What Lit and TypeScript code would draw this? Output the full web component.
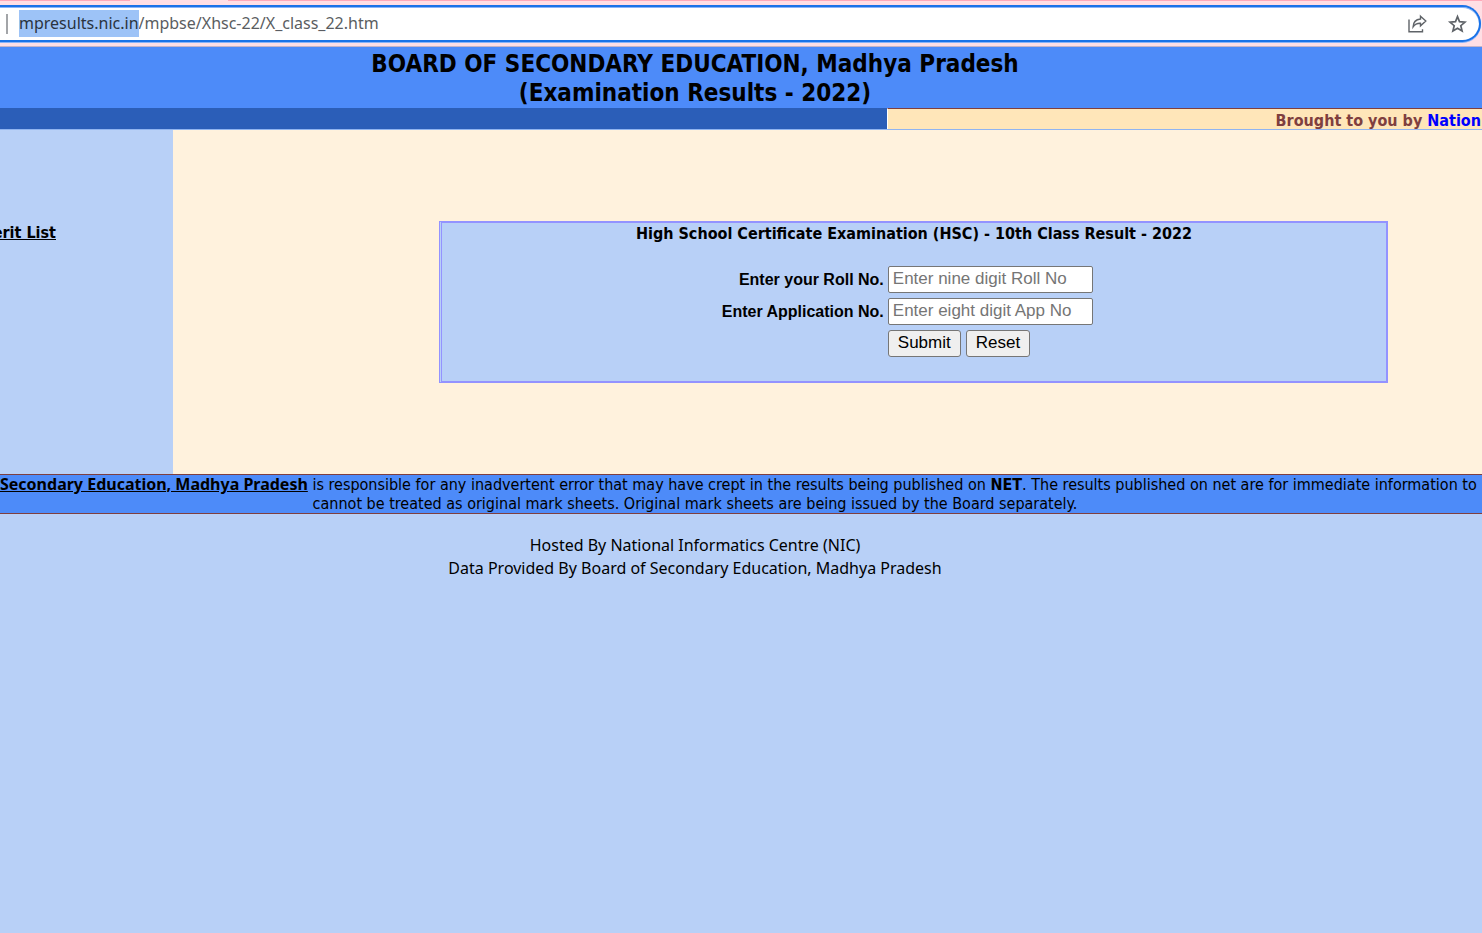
import { LitElement, html, css } from "lit";
import { customElement, query } from "lit/decorators.js";

@customElement("browser-bar")
class BrowserBar extends LitElement {
  @query("input") private field!: HTMLInputElement;

  static styles = css`
    :host {
      display: block;
      background: #ffdfe5;
      border-top: 1px solid #ffa9b9;
      border-bottom: 1px solid #c4b4c8;
      padding: 4px 1px 4px 0;
    }
    .tabs {
      position: absolute;
      top: 0;
      left: 130px;
      width: 98px;
      height: 1px;
      background: #ffdfe5;
    }
    .bar {
      display: flex;
      align-items: center;
      box-sizing: border-box;
      height: 37px;
      border: 2px solid #1a73e8;
      border-left: 0;
      border-radius: 0 19px 19px 0;
      box-shadow: 0 1px 0 #8ab4f8, inset 0 1px 0 #8ab4f8;
      background: #fff;
      padding: 0 12px 0 6px;
    }
    .divider {
      width: 2px;
      height: 20px;
      background: #a3a5a8;
      margin-right: 11px;
    }
    input {
      flex: 1;
      min-width: 0;
      border: 0;
      outline: 0;
      padding: 0;
      height: 27px;
      line-height: 27px;
      background: none;
      color: #5a5d61;
      font-family: "Noto Sans", sans-serif;
      font-size: 16px;
      caret-color: transparent;
    }
    input::selection {
      background: #9dc3f7;
      color: #2a3440;
    }
    .tool {
      border: 0;
      background: none;
      padding: 0;
      width: 20px;
      height: 20px;
      margin-left: 20px;
    }
    svg {
      display: block;
      fill: none;
      stroke: #5f6368;
    }
  `;

  firstUpdated() {
    this.field.focus();
    this.field.setSelectionRange(0, 16);
  }

  render() {
    return html`
      <div class="tabs"></div>
      <div class="bar">
        <span class="divider"></span>
        <input
          type="text"
          aria-label="Address"
          spellcheck="false"
          value="mpresults.nic.in/mpbse/Xhsc-22/X_class_22.htm"
        />
        <button class="tool" aria-label="Share">
          <svg width="20" height="20" viewBox="0 0 20 20" stroke-width="1.4">
            <path d="M2 5.500v12.300h13.500v-2.500" />
            <path
              d="M13.500 2.200l5.300 4.800-5.300 4.800V9.300c-3.700-.2-5.600 1-7.400 3.600C6.200 8.500 8.800 5.500 13.500 5z"
            />
          </svg>
        </button>
        <button class="tool" aria-label="Bookmark">
          <svg width="20" height="20" viewBox="0 0 20 20" stroke-width="1.700">
            <path
              d="M10.500 2.600l2 5 5.500.5-4.200 3.600 1.300 5.300-4.600-2.800L5.900 17l1.300-5.300L3 8.100l5.500-.5z"
            />
          </svg>
        </button>
      </div>
    `;
  }
}

@customElement("result-form")
class ResultForm extends LitElement {
  static styles = css`
    :host {
      display: block;
      background: #b8d0f7;
      border: 2px solid #9393ff;
      border-left: 3px double #9393ff;
      padding: 1px 0 24px;
    }
    h2 {
      margin: 0 0 22px;
      font-size: 16px;
      line-height: 20px;
      text-align: center;
    }
    form {
      display: grid;
      grid-template-columns: 47fr 53fr;
      gap: 5px 4px;
      align-items: center;
      font-family: "Liberation Sans", Arial, sans-serif;
      font-size: 17px;
      line-height: 20px;
    }
    label {
      text-align: right;
      font-size: 16px;
      font-weight: bold;
    }
    input {
      display: block;
      box-sizing: border-box;
      width: 205px;
      height: 27px;
      border: 1px solid #767676;
      border-radius: 2px;
      padding: 0 4px 2px;
      font: inherit;
      background: #fff;
    }
    input::placeholder {
      color: #757575;
    }
    .actions {
      grid-column: 2;
      display: flex;
      gap: 5px;
    }
    button {
      height: 27px;
      padding: 0 9px 2px;
      border: 1px solid #767676;
      border-radius: 3px;
      background: #efefef;
      color: #000;
      font: inherit;
    }
  `;

  render() {
    return html`
      <h2>High School Certificate Examination (HSC) - 10th Class Result - 2022</h2>
      <form>
        <label for="roll">Enter your Roll No.</label>
        <input id="roll" type="text" placeholder="Enter nine digit Roll No" />
        <label for="app">Enter Application No.</label>
        <input id="app" type="text" placeholder="Enter eight digit App No" />
        <div class="actions">
          <button type="submit">Submit</button>
          <button type="reset">Reset</button>
        </div>
      </form>
    `;
  }
}

@customElement("app-root")
class AppRoot extends LitElement {
  static styles = css`
    :host {
      display: flex;
      flex-direction: column;
      min-height: 100vh;
      overflow: hidden;
      background: #b8d0f7;
      color: #000;
      font-family: Tahoma, "DejaVu Sans Condensed", "Noto Sans", sans-serif;
      font-size: 16px;
    }
    .title {
      background: #4d8bf9;
      padding: 3px 92px 0 0;
      text-align: center;
    }
    h1 {
      margin: 0;
      font-size: 24px;
      line-height: 29px;
    }
    .strip {
      display: grid;
      grid-template-columns: 887fr 595fr;
      height: 21px;
      background: #2b5eb8;
      border-bottom: 1px solid #90b4f0;
    }
    .credit {
      box-sizing: border-box;
      height: 21px;
      border-top: 1px solid #7f3f3f;
      border-left: 1px solid #fff;
      background: #ffe6b9;
      color: #7f3f3f;
      padding: 1px 1px 0 0;
      font-weight: bold;
      line-height: 22px;
      text-align: right;
      white-space: nowrap;
    }
    .credit a {
      color: #00f;
      text-decoration: none;
    }
    .main {
      display: grid;
      grid-template-columns: 173px 1fr;
    }
    .side {
      padding-top: 93px;
      line-height: 20px;
    }
    .side a {
      display: block;
      width: 56px;
      direction: rtl;
      white-space: nowrap;
    }
    a {
      color: #000;
      font-weight: bold;
    }
    .content {
      background: #fff2dd;
      padding: 91px 94px 91px 266px;
    }
    .notice {
      background: #4d8bf9;
      border: solid #7f3f3f;
      border-width: 1px 0;
      line-height: 19px;
    }
    .notice p {
      margin: 0;
      white-space: nowrap;
    }
    .notice a,
    .hosting {
      font-family: "Noto Sans", sans-serif;
    }
    .notice .second {
      padding-right: 92px;
      text-align: center;
    }
    .hosting {
      padding: 20px 92px 0 0;
      line-height: 23px;
      text-align: center;
    }
    .hosting p {
      margin: 0;
    }
  `;

  render() {
    return html`
      <browser-bar></browser-bar>
      <header class="title">
        <h1>BOARD OF SECONDARY EDUCATION, Madhya Pradesh<br />(Examination Results - 2022)</h1>
      </header>
      <div class="strip">
        <span></span>
        <div class="credit">Brought to you by <a href="#nic">Nation</a></div>
      </div>
      <div class="main">
        <nav class="side"><a href="#merit">Merit List</a></nav>
        <main class="content"><result-form></result-form></main>
      </div>
      <section class="notice">
        <p>
          <a href="#board">Secondary Education, Madhya Pradesh</a> is responsible for any
          inadvertent error that may have crept in the results being published on
          <b>NET</b>. The results published on net are for immediate information to
        </p>
        <p class="second">
          cannot be treated as original mark sheets. Original mark sheets are being issued by the
          Board separately.
        </p>
      </section>
      <footer class="hosting">
        <p>Hosted By National Informatics Centre (NIC)</p>
        <p>Data Provided By Board of Secondary Education, Madhya Pradesh</p>
      </footer>
    `;
  }
}
